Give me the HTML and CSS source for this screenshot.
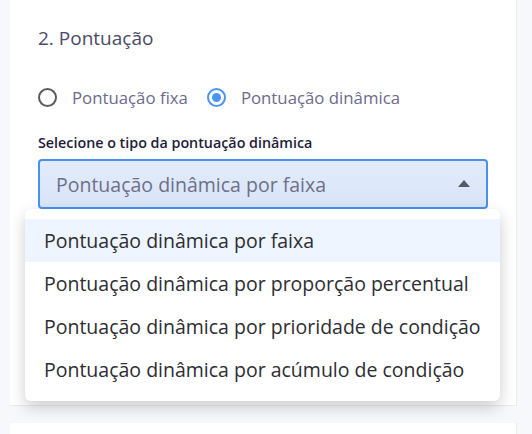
FILE: index.html
```html
<!DOCTYPE html>
<html lang="pt-BR">
<head>
    <meta charset="UTF-8">
    <meta name="viewport" content="width=device-width, initial-scale=1">
    <title>Pontuação</title>
    <link rel="stylesheet" href="styles.css">
</head>
<body>
    <section class="card">
        <h2 class="card-title">2. Pontuação</h2>

        <div class="radio-group">
            <label class="radio">
                <span class="radio-circle"></span>
                <span class="radio-text">Pontuação fixa</span>
            </label>
            <label class="radio checked">
                <span class="radio-circle"></span>
                <span class="radio-text">Pontuação dinâmica</span>
            </label>
        </div>

        <div class="field">
            <div class="field-label">Selecione o tipo da pontuação dinâmica</div>
            <div class="select open">
                <span class="select-value">Pontuação dinâmica por faixa</span>
                <span class="select-arrow"></span>
            </div>
            <ul class="menu">
                <li class="menu-item active">Pontuação dinâmica por faixa</li>
                <li class="menu-item">Pontuação dinâmica por proporção percentual</li>
                <li class="menu-item">Pontuação dinâmica por prioridade de condição</li>
                <li class="menu-item">Pontuação dinâmica por acúmulo de condição</li>
            </ul>
        </div>
    </section>

    <section class="card next"></section>
</body>
</html>
```

FILE: styles.css
```css
body {
    margin: 0;
    padding: 0 15px 0 10px;
    background-color: #f7f8fb;
    font-family: 'Open Sans', 'Noto Sans', sans-serif;
    height: 434px;
    overflow: hidden;
}
.card {
    position: relative;
    background-color: #fff;
    border-right: 1px solid #e9eaef;
    border-bottom: 1px solid #e9eaef;
    padding: 24px 28px 0 28px;
    height: 381px;
}
.card.next {
    margin-top: 17px;
    height: 40px;
    padding: 0;
}
.card-title {
    margin: 0;
    font-size: 19px;
    font-weight: 400;
    line-height: 28px;
    color: #4b4a68;
}
.radio-group {
    display: flex;
    gap: 19px;
    margin-top: 33px;
}
.radio {
    display: flex;
    align-items: center;
    gap: 15px;
    height: 24px;
}
.radio-circle {
    box-sizing: border-box;
    width: 19px;
    height: 19px;
    border: 2px solid #5b5b5b;
    border-radius: 50%;
    position: relative;
}
.radio.checked .radio-circle {
    border-color: #4a94f4;
}
.radio.checked .radio-circle::after {
    content: "";
    position: absolute;
    top: 3px;
    left: 3px;
    width: 9px;
    height: 9px;
    border-radius: 50%;
    background-color: #4a94f4;
}
.radio-text {
    font-size: 16.8px;
    color: #6d6a8c;
}
.field {
    margin-top: 24px;
}
.field-label {
    font-size: 14.3px;
    font-weight: 600;
    color: #1e1d3a;
    line-height: 20px;
    margin-bottom: 6px;
}
.select {
    box-sizing: border-box;
    height: 50px;
    border: 2px solid #4a90ee;
    border-radius: 4px;
    background: linear-gradient(#e1ebfb, #d9e5f8);
    display: flex;
    align-items: center;
    justify-content: space-between;
    padding: 0 16px 0 16px;
}
.select-value {
    font-size: 19.5px;
    color: #6f6f88;
}
.select-arrow {
    width: 0;
    height: 0;
    border-left: 6px solid transparent;
    border-right: 6px solid transparent;
    border-bottom: 7px solid #555a68;
    margin-top: -2px;
}
.menu {
    position: absolute;
    top: 209px;
    left: 15px;
    width: 475px;
    margin: 0;
    padding: 10px 0;
    list-style: none;
    background-color: #fff;
    border-radius: 6px;
    box-shadow: 0 6px 16px rgba(0, 0, 0, 0.2);
    z-index: 5;
}
.menu-item {
    height: 43px;
    line-height: 43px;
    padding: 0 19px;
    font-size: 19.5px;
    color: #2d2d33;
}
.menu-item.active {
    background-color: #eef5fe;
}
```
